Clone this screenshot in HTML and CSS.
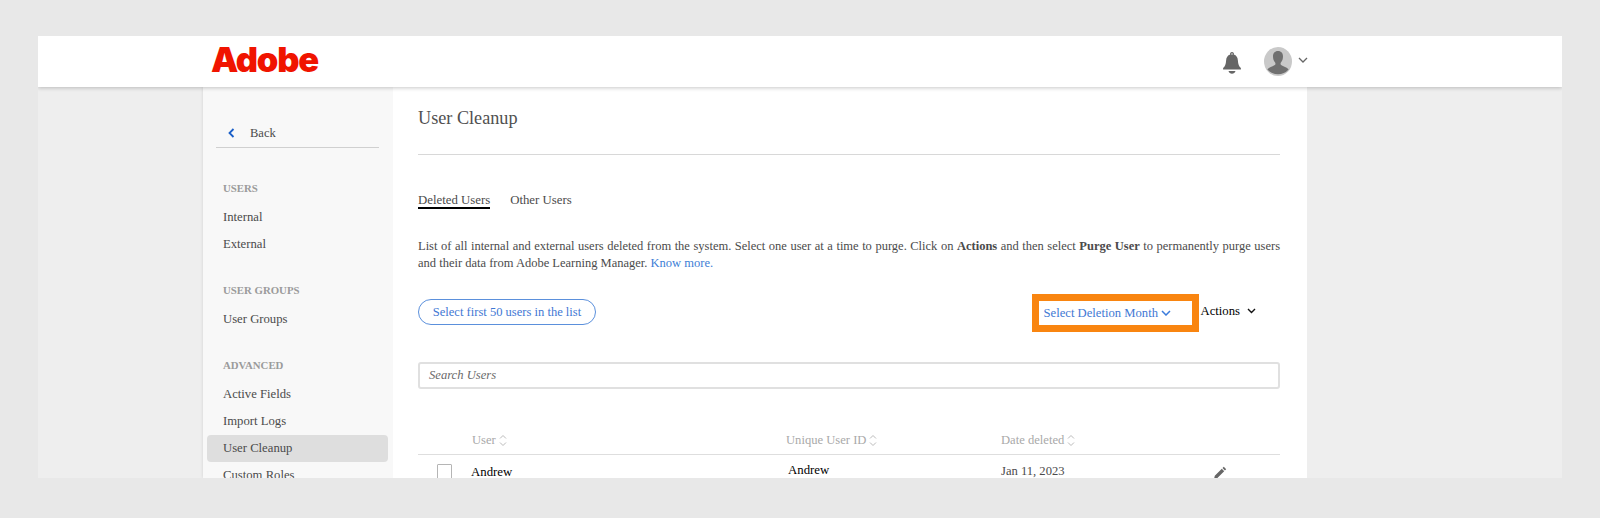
FILE: index.html
```html
<!DOCTYPE html>
<html lang="en">
<head>
<meta charset="utf-8">
<title>User Cleanup</title>
<link rel="stylesheet" href="styles.css">
</head>
<body>
<div class="frame">
  <header class="topbar">
    <div class="logo">Adobe</div>
    <div class="top-actions">
      <svg class="bell" width="20" height="24" viewBox="0 0 20 24"><path fill="#666" d="M10 1a1.9 1.9 0 0 1 1.8 2.6c2.6.8 3.9 3 4.1 5.9.2 3.6 1 5.900 3 7.500v1.500H1.100V17c2-1.600 2.800-3.900 3-7.500.2-2.900 1.500-5.100 4.100-5.900A1.900 1.900 0 0 1 10 1zm0 1.300a.7.7 0 1 0 0 1.400.7.700 0 0 0 0-1.400zM6.500 20h7c-.5 1.700-1.900 2.700-3.500 2.700S7 21.700 6.500 20z"/></svg>
      <svg class="avatar" width="28" height="29" viewBox="0 0 28 29"><ellipse cx="14" cy="14.500" rx="14" ry="14.500" fill="#c9c9c9"/><path fill="#707070" d="M14 4c3.300 0 5 2.300 5 5.500 0 2.500-.8 4.600-2.100 6-.5.600-.5 2 .2 2.500 2 1.300 6 2.300 7.500 4.500a14 14 0 0 1-21.200 0c1.500-2.200 5.500-3.200 7.500-4.500.7-.5.700-1.900.2-2.500C9.800 14.100 9 12 9 9.500 9 6.300 10.700 4 14 4z"/></svg>
      <svg class="avatar-caret" width="10" height="6" viewBox="0 0 10 6"><path d="M1 1l4 4 4-4" fill="none" stroke="#666" stroke-width="1.300"/></svg>
    </div>
  </header>
  <div class="body">
    <aside class="sidebar">
      <div class="back">
        <svg width="7" height="10" viewBox="0 0 7 10"><path d="M5.500 1L1.500 5l4 4" fill="none" stroke="#1a5fc8" stroke-width="1.800"/></svg>
        <span>Back</span>
      </div>
      <div class="group-title first">USERS</div>
      <div class="nav-item">Internal</div>
      <div class="nav-item">External</div>
      <div class="group-title">USER GROUPS</div>
      <div class="nav-item">User Groups</div>
      <div class="group-title">ADVANCED</div>
      <div class="nav-item">Active Fields</div>
      <div class="nav-item">Import Logs</div>
      <div class="nav-item active">User Cleanup</div>
      <div class="nav-item">Custom Roles</div>
    </aside>
    <main class="content">
      <h1 class="title">User Cleanup</h1>
      <nav class="tabs">
        <span class="tab selected">Deleted Users</span>
        <span class="tab">Other Users</span>
      </nav>
      <p class="intro">List of all internal and external users deleted from the system. Select one user at a time to purge. Click on <b>Actions</b> and then select <b>Purge User</b> to permanently purge users and their data from Adobe Learning Manager. <a class="link">Know more.</a></p>
      <div class="toolbar">
        <button class="pill">Select first 50 users in the list</button>
        <div class="tool-right">
          <div class="month-box">
            <span>Select Deletion Month</span>
            <svg width="10" height="6" viewBox="0 0 10 6"><path d="M1 1l4 4 4-4" fill="none" stroke="#3a7bdc" stroke-width="1.500"/></svg>
          </div>
          <div class="actions">
            <span>Actions</span>
            <svg width="9" height="6" viewBox="0 0 9 6"><path d="M1 1l3.500 3.500L8 1" fill="none" stroke="#111" stroke-width="1.400"/></svg>
          </div>
        </div>
      </div>
      <div class="search">Search Users</div>
      <div class="table-row head">
        <span></span>
        <span class="th">User <svg class="sort" width="8" height="13" viewBox="0 0 8 13"><path d="M1 4.500L4 1.500l3 3M1 8.500l3 3 3-3" fill="none" stroke="#bbb" stroke-width="1"/></svg></span>
        <span class="th">Unique User ID <svg class="sort" width="8" height="13" viewBox="0 0 8 13"><path d="M1 4.500L4 1.500l3 3M1 8.500l3 3 3-3" fill="none" stroke="#bbb" stroke-width="1"/></svg></span>
        <span class="th">Date deleted <svg class="sort" width="8" height="13" viewBox="0 0 8 13"><path d="M1 4.500L4 1.500l3 3M1 8.500l3 3 3-3" fill="none" stroke="#bbb" stroke-width="1"/></svg></span>
        <span></span>
      </div>
      <div class="table-row data">
        <span class="check"></span>
        <span class="name">Andrew</span>
        <span class="uid">Andrew</span>
        <span class="date">Jan 11, 2023</span>
        <svg class="pencil" width="14" height="14" viewBox="0 0 14 14"><path fill="#666" d="M10.800.8l2.400 2.400-1.300 1.300-2.400-2.400zM8.800 2.800l2.400 2.400-7 7L1 13l.8-3.200z"/></svg>
      </div>
    </main>
  </div>
</div>
</body>
</html>
```
FILE: styles.css
```css
* { box-sizing: border-box; }
html, body { margin: 0; height: 518px; overflow: hidden; }
body {
  background: #e8e8e8;
  padding: 36px 38px 40px;
  font-family: "Liberation Serif", "Times New Roman", serif;
  font-size: 12px;
  color: #4b4b4b;
}
.frame {
  height: 442px;
  background: #eeeeee;
  overflow: hidden;
  display: flex;
  flex-direction: column;
}
.topbar {
  flex: none;
  height: 51px;
  background: #fff;
  box-shadow: 0 1px 4px rgba(0,0,0,.22);
  position: relative;
  z-index: 1;
  display: flex;
  align-items: center;
  justify-content: space-between;
  padding: 0 254px 0 173px;
}
.logo {
  font-family: Inter, "Liberation Sans", sans-serif;
  font-weight: 900;
  font-size: 34.500px;
  letter-spacing: -1.200px;
  line-height: 34px;
  color: #f01400;
  margin-top: -3px;
}
.top-actions { display: flex; align-items: center; }
.bell { margin-right: 22px; margin-top: 2px; }
.avatar { margin-right: 6px; margin-top: 0; }
.avatar-caret { margin-top: -3px; }
.body {
  flex: 1;
  display: flex;
  margin: 0 255px 0 165px;
  min-height: 0;
}
.sidebar {
  flex: none;
  width: 190px;
  background: #f8f8f8;
  box-shadow: 0 0 3px rgba(0,0,0,.12);
  padding: 36px 5px 0 4px;
}
.back {
  margin: 0 9px;
  height: 25px;
  border-bottom: 1px solid #d0d0d0;
  display: flex;
  align-items: flex-start;
  padding: 2px 0 0 12px;
  gap: 15px;
  font-size: 12.500px;
  line-height: 16px;
}
.back svg { margin-top: 3px; }
.group-title {
  margin-top: 24.500px;
  padding-left: 16px;
  font-size: 10.800px;
  font-weight: bold;
  color: #9b9b9b;
  line-height: 14px;
  height: 17px;
}
.group-title.first { margin-top: 32.500px; }
.nav-item {
  height: 27px;
  line-height: 26px;
  padding-left: 16px;
  font-size: 12.700px;
  border-radius: 4px;
}
.group-title + .nav-item { margin-top: 6.500px; }
.nav-item.active { background: #dedede; }
.content {
  flex: 1;
  background: #fff;
  padding: 0 27px 0 25px;
  min-width: 0;
}
.title {
  margin: 0;
  height: 68px;
  padding-top: 20px;
  border-bottom: 1px solid #d8d8d8;
  font-size: 18.200px;
  line-height: 22px;
  font-weight: normal;
  color: #505050;
}
.tabs {
  display: flex;
  gap: 20px;
  margin-top: 38px;
  height: 16px;
}
.tab { font-size: 12.800px; line-height: 14px; height: 16px; }
.tab.selected { border-bottom: 2px solid #000; }
.intro {
  margin: 29px 0 0;
  font-size: 12.500px;
  line-height: 17px;
  text-align: justify;
}
.link { color: #3d7ed6; }
.toolbar {
  display: flex;
  justify-content: space-between;
  align-items: flex-start;
  margin-top: 22px;
}
.pill {
  margin-top: 5px;
  width: 178px;
  height: 26px;
  background: #fff;
  border: 1px solid #5b90dc;
  border-radius: 13px;
  font: 12.550px/1 "Liberation Serif", serif;
  color: #3f78d4;
  padding: 0;
}
.tool-right { display: flex; margin-right: 24px; }
.month-box {
  width: 167px;
  height: 38px;
  border: 7px solid #f98510;
  background: #fff;
  display: flex;
  align-items: center;
  gap: 3px;
  padding-left: 5px;
  color: #3f78d4;
  font-size: 12.650px;
}
.actions {
  display: flex;
  align-items: center;
  gap: 7px;
  height: 34px;
  padding-left: 2px;
  color: #000;
  font-size: 12.700px;
}
.search {
  margin-top: 30px;
  height: 27px;
  border: 2px solid #e0e0e0;
  border-radius: 3px;
  padding-left: 9px;
  font-style: italic;
  font-size: 12.600px;
  line-height: 23px;
  color: #6a6a6a;
}
.table-row {
  display: grid;
  grid-template-columns: 54px 314px 215px 211px 1fr;
  align-items: center;
}
.table-row.head {
  margin-top: 39px;
  height: 27px;
  border-bottom: 1px solid #dedede;
  padding-bottom: 1px;
}
.th { color: #a9a9a9; font-size: 12.600px; display: flex; align-items: center; gap: 3px; }
.sort { margin-top: -1px; }
.table-row.data { height: 30px; padding-top: 5px; align-items: start; }
.check {
  width: 15px;
  height: 15px;
  margin-left: 19px;
  margin-top: 4px;
  border: 1px solid #b5b5b5;
  border-radius: 1px;
  background: #fff;
}
.name { color: #000; font-size: 12.800px; margin-top: 5px; margin-left: -1px; }
.uid { color: #000; font-size: 12.800px; margin-top: 3px; margin-left: 2px; }
.date { font-size: 12.600px; margin-top: 4px; }
.pencil { margin-top: 6px; margin-left: 1px; }
```
